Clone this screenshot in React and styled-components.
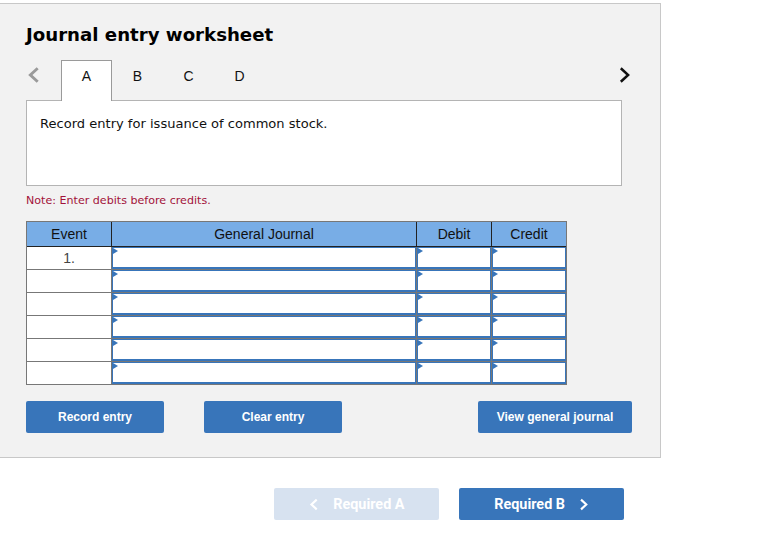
import React from "react";
import styled, { createGlobalStyle } from "styled-components";

const Global = createGlobalStyle`
  html, body { margin: 0; padding: 0; background: #fff; }
  body { font-family: "DejaVu Sans", Verdana, sans-serif; color: #000; }
`;

const Page = styled.div`
  width: 766px;
  height: 544px;
  padding-top: 3px;
  box-sizing: border-box;
  overflow: hidden;
`;

const Panel = styled.section`
  width: 661px;
  height: 455px;
  box-sizing: border-box;
  background: #f2f2f2;
  border: 1px solid #c8c8c8;
  border-left: none;
  padding: 19px 0 0 26px;
`;

const Title = styled.h1`
  margin: 0;
  font-size: 18.17px;
  line-height: 24px;
  font-weight: 700;
  color: #000;
`;

const TabRow = styled.div`
  display: flex;
  align-items: stretch;
  height: 41px;
  margin-top: 13px;
  width: 606px;
  position: relative;
  z-index: 1;
`;

const Arrow = styled.div`
  width: ${(p) => p.$w}px;
  display: flex;
  align-items: center;
  padding-bottom: 11px;
  padding-left: ${(p) => p.$pad || 0}px;
  box-sizing: border-box;
`;

const Tab = styled.div`
  width: 51px;
  box-sizing: border-box;
  display: flex;
  align-items: center;
  justify-content: center;
  padding-bottom: 10px;
  font-family: "Liberation Sans", Arial, sans-serif;
  font-size: 14px;
  color: #111;
  ${(p) =>
    p.$active &&
    `
    background: #fff;
    border: 1px solid #9a9a9a;
    border-bottom: none;
    height: 41px;
  `}
`;

const Spacer = styled.div`
  flex: 1;
`;

const Prompt = styled.div`
  width: 596px;
  height: 86px;
  box-sizing: border-box;
  margin-top: -1px;
  background: #fff;
  border: 1px solid #b4b4b4;
  padding: 14px 13px;
  font-size: 13.05px;
  line-height: 17px;
  color: #111;
`;

const Note = styled.p`
  margin: 7px 0 0;
  font-size: 11.1px;
  line-height: 15px;
  color: #a3123a;
`;

const Table = styled.table`
  margin-top: 13px;
  border-collapse: separate;
  border-spacing: 0;
  table-layout: fixed;
  width: 541px;
  font-family: "Liberation Sans", Arial, sans-serif;
  border: 1px solid #777;
`;

const Head = styled.th`
  height: 25px;
  padding: 0;
  box-sizing: border-box;
  background: #78ade6;
  border-right: 1px solid #222;
  border-bottom: 1px solid #222;
  font-size: 14px;
  font-weight: 400;
  color: #111;
  text-align: center;
  &:last-child { border-right: none; }
`;

const EventCell = styled.td`
  height: 23px;
  padding: 0;
  box-sizing: border-box;
  background: #fff;
  border-right: 1px solid #777;
  border-bottom: 1px solid #777;
  tr:last-child > & { border-bottom: none; height: 22px; }
  font-size: 14px;
  text-align: center;
  color: #444;
  line-height: 20px;
`;

const EntryCell = styled.td`
  height: 23px;
  padding: 0;
  box-sizing: border-box;
  background: #fff;
  border-right: 1px solid #777;
  border-bottom: 1px solid #777;
  position: relative;
  tr:last-child > & { border-bottom: none; height: 22px; }
  &:last-child { border-right: none; }
`;

const EntryBox = styled.div`
  height: 22px;
  box-sizing: border-box;
  border: 1px solid #3875ba;
  border-bottom-width: 2px;
  background: #fff;
  &::before {
    content: "";
    position: absolute;
    left: 1px;
    top: 1px;
    border-left: 5px solid #3875ba;
    border-top: 3.5px solid transparent;
    border-bottom: 3.5px solid transparent;
  }
`;

const Actions = styled.div`
  width: 606px;
  margin-top: 16px;
  display: flex;
  gap: 40px;
`;

const Button = styled.button`
  height: 32px;
  width: ${(p) => p.$w}px;
  margin-left: ${(p) => (p.$auto ? "auto" : "0")};
  padding: 0;
  border: none;
  border-radius: 2px;
  background: #3875ba;
  color: #fff;
  font-family: "Liberation Sans", Arial, sans-serif;
  font-size: 12px;
  font-weight: 700;
`;

const Footer = styled.div`
  width: 624px;
  margin-top: 30px;
  display: flex;
  justify-content: flex-end;
  gap: 20px;
`;

const NavButton = styled.button`
  width: 165px;
  height: 32px;
  padding: 0;
  border: none;
  border-radius: 2px;
  background: ${(p) => (p.$disabled ? "#d7e2f0" : "#3875ba")};
  color: #fff;
  font-family: Roboto, "Liberation Sans", sans-serif;
  font-size: 14.4px;
  font-weight: 700;
  display: flex;
  align-items: center;
  justify-content: center;
  gap: ${(p) => (p.$disabled ? 15 : 14)}px;
`;

const Chevron = ({ dir, color, size = 16, w = 2.4 }) => (
  <svg width={size * 0.75} height={size} viewBox="0 0 12 16" fill="none" aria-hidden="true">
    <path
      d={dir === "left" ? "M9.5 2 L3 8 L9.5 14" : "M2.5 2 L9 8 L2.5 14"}
      stroke={color}
      strokeWidth={w}
    />
  </svg>
);

const rows = ["1.", "", "", "", "", ""];

export default function App() {
  return (
    <Page>
      <Global />
      <Panel>
        <Title>Journal entry worksheet</Title>
        <TabRow>
          <Arrow $w={35} $pad={1}>
            <Chevron dir="left" color="#9a9a9a" size={18} w={2.6} />
          </Arrow>
          <Tab $active>A</Tab>
          <Tab>B</Tab>
          <Tab>C</Tab>
          <Tab>D</Tab>
          <Spacer />
          <Arrow $w={14}>
            <Chevron dir="right" color="#111" size={18} w={2.2} />
          </Arrow>
        </TabRow>
        <Prompt>Record entry for issuance of common stock.</Prompt>
        <Note>Note: Enter debits before credits.</Note>
        <Table>
          <colgroup>
            <col style={{ width: 85 }} />
            <col style={{ width: 305 }} />
            <col style={{ width: 75 }} />
            <col style={{ width: 74 }} />
          </colgroup>
          <thead>
            <tr>
              <Head>Event</Head>
              <Head>General Journal</Head>
              <Head>Debit</Head>
              <Head>Credit</Head>
            </tr>
          </thead>
          <tbody>
            {rows.map((r, i) => (
              <tr key={i}>
                <EventCell>{r}</EventCell>
                <EntryCell><EntryBox /></EntryCell>
                <EntryCell><EntryBox /></EntryCell>
                <EntryCell><EntryBox /></EntryCell>
              </tr>
            ))}
          </tbody>
        </Table>
        <Actions>
          <Button $w={138}>Record entry</Button>
          <Button $w={138}>Clear entry</Button>
          <Button $w={154} $auto>View general journal</Button>
        </Actions>
      </Panel>
      <Footer>
        <NavButton $disabled>
          <Chevron dir="left" color="#fff" size={13} w={2.6} />
          Required A
        </NavButton>
        <NavButton>
          Required B
          <Chevron dir="right" color="#fff" size={13} w={2.6} />
        </NavButton>
      </Footer>
    </Page>
  );
}
